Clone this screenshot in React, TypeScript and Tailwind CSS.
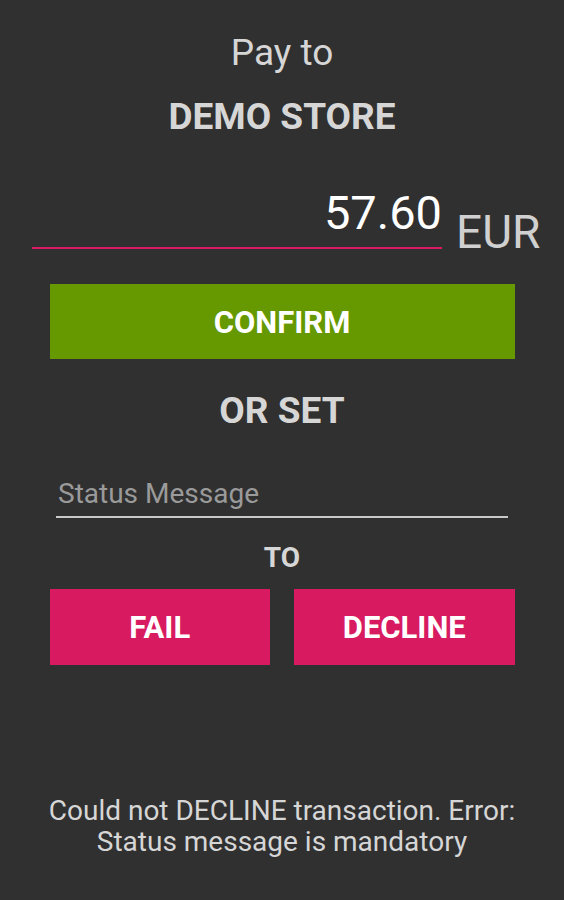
export default function App() {
  return (
    <div
      className="min-h-[900px] w-full bg-[#303030] flex flex-col items-center text-[#d6d6d6]"
      style={{ fontFamily: "Roboto, 'Liberation Sans', sans-serif" }}
    >
      {/* Header */}
      <div className="pt-[28px] text-[37px] leading-[50px]">Pay to</div>
      <div className="mt-[14px] text-[37px] leading-[50px] font-bold">DEMO STORE</div>

      {/* Amount */}
      <div className="mt-[43px] w-full flex items-end pl-[32px]">
        <div className="w-[410px] border-b-2 border-[#d81b60] text-right text-white text-[47px] leading-[50px] pt-[3px] pb-[9px]">
          57.60
        </div>
        <div className="ml-[14px] text-[46px] leading-[46px] -mb-[6px] text-[#d0d0d0]">EUR</div>
      </div>

      {/* Confirm */}
      <button className="mt-[35px] w-[465px] h-[75px] bg-[#669900] text-white font-bold text-[31px] pt-[3px]">
        CONFIRM
      </button>

      <div className="mt-[27px] text-[37px] leading-[50px] font-bold text-[#d6d6d6]">OR SET</div>

      {/* Status message input */}
      <div className="mt-[40px] w-[452px] border-b-2 border-[#c8c8c8] pl-[2px] pb-[4px] text-[28px] leading-[36px] text-[#9a9a9a]">
        Status Message
      </div>

      <div className="mt-[20px] text-[28px] leading-[40px] font-bold">TO</div>

      {/* Fail / Decline */}
      <div className="mt-[11px] w-[465px] flex gap-[24px]">
        <button className="flex-1 h-[76px] bg-[#d81b60] text-white font-bold text-[31px] pt-[2px]">FAIL</button>
        <button className="flex-1 h-[76px] bg-[#d81b60] text-white font-bold text-[31px] pt-[2px]">DECLINE</button>
      </div>

      {/* Error */}
      <div className="mt-[130px] text-center text-[28px] leading-[31px] text-[#d6d6d6]">
        Could not DECLINE transaction. Error:
        <br />
        Status message is mandatory
      </div>
    </div>
  )
}
